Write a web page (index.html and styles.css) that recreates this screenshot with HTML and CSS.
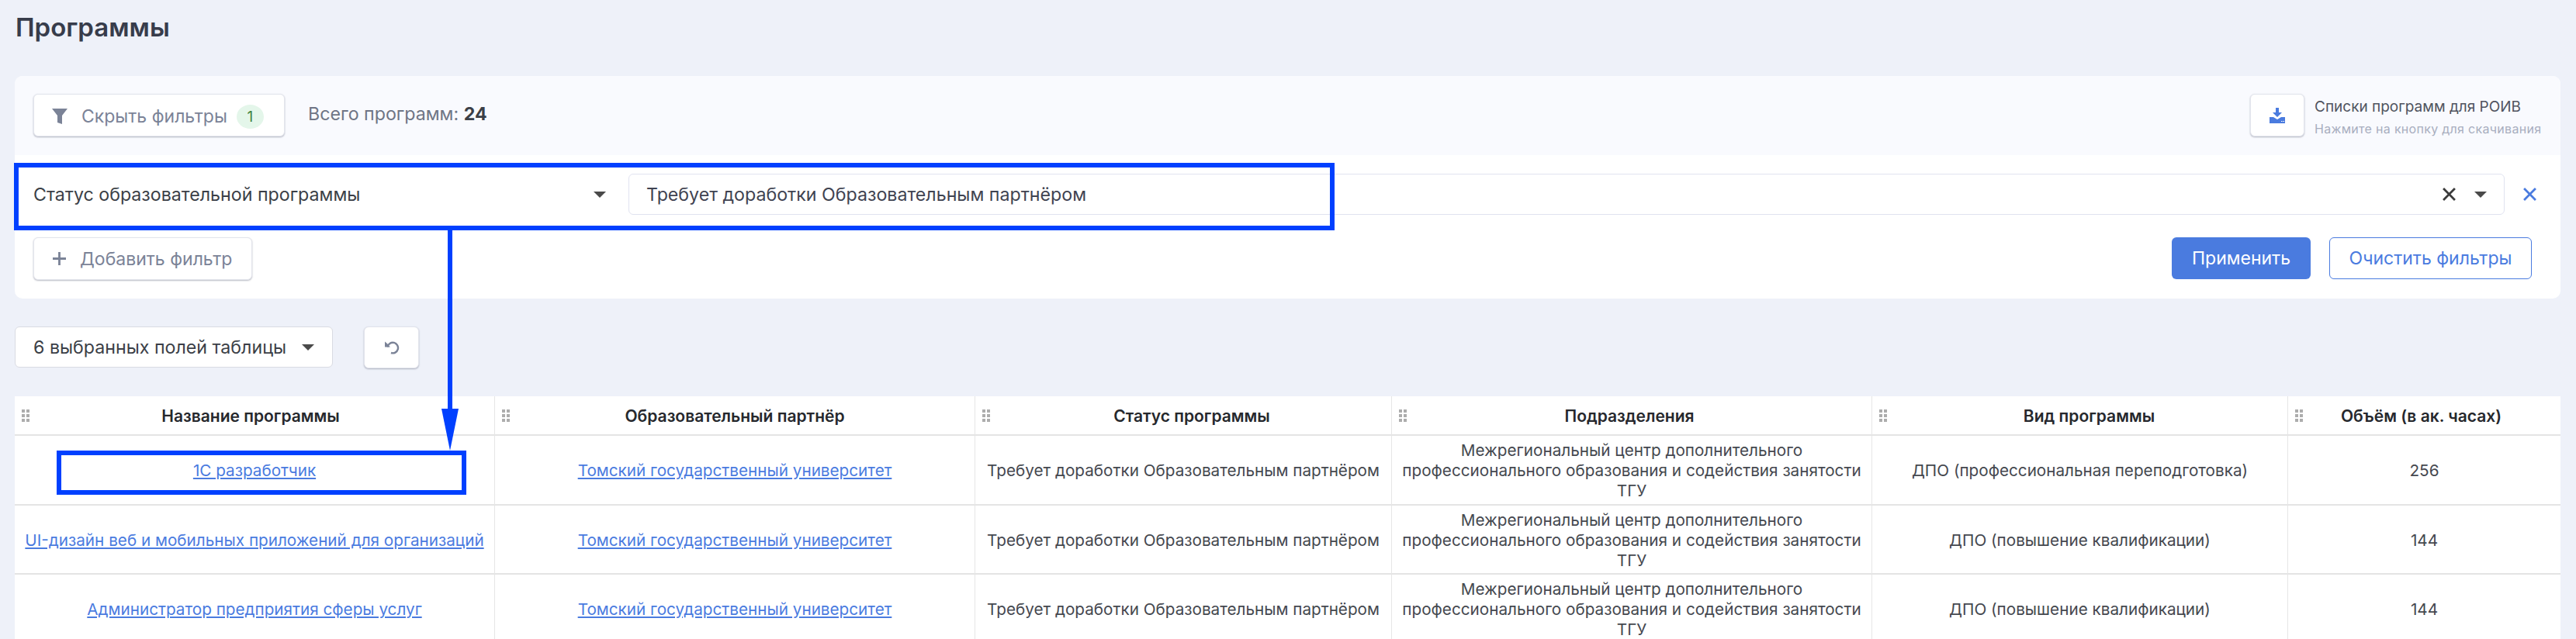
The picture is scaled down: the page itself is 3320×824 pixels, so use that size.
FILE: index.html
```html
<!DOCTYPE html>
<html lang="ru">
<head>
<meta charset="utf-8">
<title>Программы</title>
<link rel="stylesheet" href="styles.css">
</head>
<body>
<main class="page">
  <h1 class="title">Программы</h1>

  <section class="panel">
    <div class="panel-top">
      <div class="top-left">
        <button class="btn btn-hide">
          <svg class="icon-filter" viewBox="0 0 20 20"><path d="M0 0H20L13 9V20L7 18V9Z"/></svg>
          <span>Скрыть фильтры</span>
          <span class="badge">1</span>
        </button>
        <div class="total">Всего программ: <b>24</b></div>
      </div>
      <div class="download">
        <button class="btn btn-download">
          <svg class="icon-download" viewBox="0 0 20 20"><path d="M8 0H12V6H16L10 12L4 6H8Z"/><path fill-rule="evenodd" d="M0 12H5L10 15L15 12H20V20H0ZM15 17V18H16.500V17ZM17.500 17V18H19V17Z"/></svg>
        </button>
        <div class="download-text">
          <div class="download-name">Списки программ для РОИВ</div>
          <div class="download-hint">Нажмите на кнопку для скачивания</div>
        </div>
      </div>
    </div>

    <div class="panel-body">
      <div class="filter-row">
        <div class="filter-field">
          <span>Статус образовательной программы</span>
          <i class="caret"></i>
        </div>
        <div class="filter-value">
          <span class="filter-value-text">Требует доработки Образовательным партнёром</span>
          <svg class="icon-x" viewBox="0 0 16 16"><path d="M1 1L15 15M15 1L1 15"/></svg>
          <i class="caret caret-value"></i>
        </div>
        <svg class="icon-remove" viewBox="0 0 16 16"><path d="M1 1L15 15M15 1L1 15"/></svg>
      </div>
      <div class="actions">
        <button class="btn btn-add">
          <svg class="icon-plus" viewBox="0 0 18 18"><path d="M9 0V18M0 9H18"/></svg>
          <span>Добавить фильтр</span>
        </button>
        <div class="actions-right">
          <button class="btn-apply">Применить</button>
          <button class="btn-clear">Очистить фильтры</button>
        </div>
      </div>
    </div>
  </section>

  <div class="table-tools">
    <div class="fields-select">
      <span>6 выбранных полей таблицы</span>
      <i class="caret"></i>
    </div>
    <button class="btn btn-reset">
      <svg class="icon-reset" viewBox="0 0 20 20"><path d="M4.500 9.500A6.800 6.800 0 1 1 9 17"/><path class="solid" d="M1 2.500V9.500H8L6 7.500L4 5Z"/></svg>
    </button>
  </div>

  <div class="grid">
    <div class="cell head"><i class="grip"></i>Название программы</div>
    <div class="cell head"><i class="grip"></i>Образовательный партнёр</div>
    <div class="cell head"><i class="grip"></i>Статус программы</div>
    <div class="cell head"><i class="grip"></i>Подразделения</div>
    <div class="cell head"><i class="grip"></i>Вид программы</div>
    <div class="cell head"><i class="grip"></i>Объём (в ак. часах)</div>

    <div class="cell"><a href="#">1С разработчик</a></div>
    <div class="cell"><a href="#">Томский государственный университет</a></div>
    <div class="cell">Требует доработки Образовательным партнёром</div>
    <div class="cell">Межрегиональный центр дополнительного профессионального образования и содействия занятости ТГУ</div>
    <div class="cell">ДПО (профессиональная переподготовка)</div>
    <div class="cell">256</div>

    <div class="cell"><a href="#">UI-дизайн веб и мобильных приложений для организаций</a></div>
    <div class="cell"><a href="#">Томский государственный университет</a></div>
    <div class="cell">Требует доработки Образовательным партнёром</div>
    <div class="cell">Межрегиональный центр дополнительного профессионального образования и содействия занятости ТГУ</div>
    <div class="cell">ДПО (повышение квалификации)</div>
    <div class="cell">144</div>

    <div class="cell"><a href="#">Администратор предприятия сферы услуг</a></div>
    <div class="cell"><a href="#">Томский государственный университет</a></div>
    <div class="cell">Требует доработки Образовательным партнёром</div>
    <div class="cell">Межрегиональный центр дополнительного профессионального образования и содействия занятости ТГУ</div>
    <div class="cell">ДПО (повышение квалификации)</div>
    <div class="cell">144</div>
  </div>

  <div class="mark mark-filter"></div>
  <div class="mark mark-row"></div>
  <div class="mark-line"></div>
  <svg class="mark-head" viewBox="0 0 22 54"><path d="M0 0H22L11 54Z"/></svg>
</main>
</body>
</html>
```

FILE: styles.css
```css
* { box-sizing: border-box; }

html, body {
  margin: 0;
  height: 824px;
  overflow: hidden;
}

body {
  background: #eef1f9;
  font-family: Inter, "Noto Sans", sans-serif;
  color: #3b3f47;
}

.page {
  position: relative;
  height: 824px;
  padding: 0 20px 0 19px;
}

.title {
  margin: 0;
  padding: 15px 0 0 1px;
  height: 98px;
  font-size: 33px;
  line-height: 40px;
  font-weight: 600;
  color: #373c4b;
}

.panel {
  height: 287px;
  border-radius: 10px;
  background: #fff;
  overflow: hidden;
}

.panel-top {
  height: 102px;
  background: #f9fafe;
  padding: 23px 25px 0 24px;
  display: flex;
  justify-content: space-between;
  align-items: flex-start;
}

.top-left {
  display: flex;
  align-items: flex-start;
  gap: 30px;
}

.btn {
  display: flex;
  align-items: center;
  height: 55px;
  padding: 0;
  border: 1px solid #e2e4ec;
  border-radius: 6px;
  background: #fff;
  box-shadow: 0 1px 2px rgba(50, 55, 80, .35);
  font: inherit;
  font-size: 23px;
  color: #7b8397;
}

.btn-hide {
  width: 324px;
  padding: 3px 0 0 23px;
}

.icon-filter {
  width: 20px;
  height: 20px;
  fill: #7b8397;
  margin-right: 18px;
}

.badge {
  width: 35px;
  height: 31px;
  margin-left: 12px;
  border-radius: 50%;
  background: #e4f6ea;
  color: #43843f;
  font-size: 19px;
  line-height: 31px;
  text-align: center;
}

.total {
  margin-top: 12px;
  font-size: 23.200px;
  line-height: 28px;
  color: #6f7585;
}

.total b {
  color: #3b3f47;
  font-weight: 700;
}

.download {
  display: flex;
  gap: 13px;
}

.btn-download {
  width: 70px;
  justify-content: center;
}

.icon-download {
  width: 20px;
  height: 20px;
  fill: #4a7bdf;
}

.download-text {
  width: 292px;
  white-space: nowrap;
}

.download-name {
  margin-top: 5px;
  font-size: 19px;
  line-height: 24px;
  color: #50545f;
}

.download-hint {
  margin-top: 6px;
  font-size: 16px;
  line-height: 20px;
  letter-spacing: .3px;
  color: #a8aebe;
}

.panel-body {
  padding: 24px 31px 24px 24px;
}

.filter-row {
  display: flex;
  align-items: center;
  height: 53px;
}

.filter-field {
  width: 767px;
  flex: none;
  display: flex;
  align-items: center;
  justify-content: space-between;
  padding-right: 29px;
  font-size: 23.200px;
  color: #3b3f47;
}

.caret {
  display: block;
  width: 0;
  height: 0;
  border-left: 8px solid transparent;
  border-right: 8px solid transparent;
  border-top: 8px solid #4a4a4a;
}

.filter-value {
  width: 2418px;
  flex: none;
  height: 53px;
  display: flex;
  align-items: center;
  padding: 0 22px;
  border: 1px solid #e0e3f0;
  border-radius: 6px;
  font-size: 23.200px;
  color: #3f4351;
}

.filter-value-text {
  flex: 1;
}

.icon-x {
  width: 17px;
  height: 17px;
  stroke: #3b3b3b;
  stroke-width: 2.600;
  fill: none;
}

.caret-value {
  margin-left: 24px;
}

.icon-remove {
  flex: none;
  width: 17px;
  height: 17px;
  margin-left: 24px;
  stroke: #4a7bdf;
  stroke-width: 2.600;
  fill: none;
}

.actions {
  display: flex;
  justify-content: space-between;
  margin-top: 29px;
  padding-right: 6px;
}

.btn-add {
  width: 282px;
  padding-left: 24px;
}

.icon-plus {
  width: 17px;
  height: 17px;
  margin-right: 18px;
  stroke: #7b8397;
  stroke-width: 3;
}

.actions-right {
  display: flex;
  gap: 24px;
}

.btn-apply,
.btn-clear {
  height: 54px;
  border-radius: 6px;
  font: inherit;
  font-size: 23px;
}

.btn-apply {
  width: 179px;
  border: 0;
  background: #4a7bdf;
  color: #fff;
}

.btn-clear {
  width: 261px;
  border: 1px solid #4a7bdf;
  background: #fff;
  color: #4a7bdf;
}

.table-tools {
  display: flex;
  gap: 40px;
  margin-top: 36px;
  height: 54px;
}

.fields-select {
  width: 410px;
  height: 53px;
  display: flex;
  align-items: center;
  justify-content: space-between;
  padding: 0 23px;
  border: 1px solid #d9dbe2;
  border-radius: 6px;
  background: #fff;
  font-size: 23.200px;
  color: #3b3f47;
}

.btn-reset {
  width: 71px;
  height: 54px;
  justify-content: center;
}

.icon-reset {
  width: 20px;
  height: 20px;
  fill: none;
  stroke: #7b8397;
  stroke-width: 2.400;
}

.icon-reset .solid {
  fill: #7b8397;
  stroke: none;
}

.grid {
  display: grid;
  grid-template-columns: 618px 619px 537px 619px 536px 352px;
  grid-template-rows: 51px 90px 89px 89px;
  margin-top: 36px;
  background: #fff;
  font-size: 20.700px;
  line-height: 26px;
  color: #45484f;
}

.cell {
  position: relative;
  display: flex;
  align-items: center;
  justify-content: center;
  padding: 2px 8px 0;
  text-align: center;
  border-left: 1px solid #e6e6e6;
  border-bottom: 2px solid #e4e4e4;
}

.cell:nth-child(6n+1) {
  border-left: 0;
}

.head {
  font-size: 21px;
  font-weight: 600;
  color: #26282d;
}

.head:nth-child(1) { padding-right: 18px; }
.head:nth-child(3) { padding-left: 30px; }
.head:nth-child(4) { padding-right: 14px; }
.head:nth-child(5) { padding-left: 32px; }
.head:nth-child(6) { padding-right: 16px; }

.cell a {
  color: #4a7bdf;
}

.grip {
  position: absolute;
  left: 9px;
  top: 17px;
  width: 4px;
  height: 4px;
  background: #acacac;
  box-shadow: 6px 0 #acacac, 0 6px #acacac, 6px 6px #acacac, 0 12px #acacac, 6px 12px #acacac;
}

.mark {
  position: absolute;
  border: 6px solid #0040ff;
}

.mark-filter {
  left: 18px;
  top: 210px;
  width: 1702px;
  height: 87px;
}

.mark-row {
  left: 73px;
  top: 581px;
  width: 528px;
  height: 57px;
}

.mark-line {
  position: absolute;
  left: 577px;
  top: 297px;
  width: 6px;
  height: 232px;
  background: #0040ff;
}

.mark-head {
  position: absolute;
  left: 569px;
  top: 527px;
  width: 22px;
  height: 54px;
  fill: #0040ff;
}
```
